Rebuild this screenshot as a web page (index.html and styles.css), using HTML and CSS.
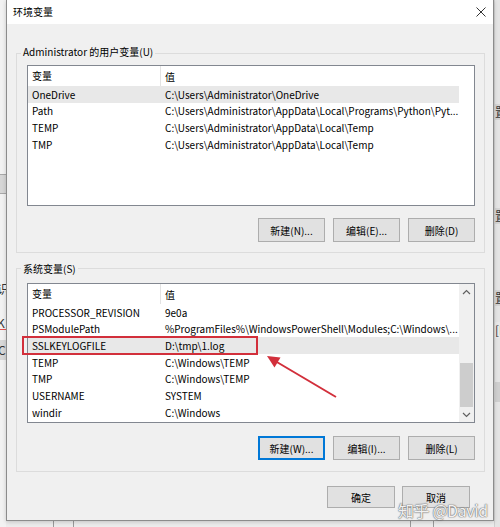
FILE: index.html
```html
<!DOCTYPE html>
<html lang="zh-CN">
<head>
<meta charset="utf-8">
<title>环境变量</title>
<link rel="stylesheet" href="styles.css">
</head>
<body>
<div class="desk">
  <div class="strip strip-l">
    <div class="sp" style="height:174px"></div>
    <div class="l-bar"></div>
    <div class="sp" style="height:88px"></div>
    <div class="l-txt">识</div>
    <div class="sp" style="height:20px"></div>
    <div class="l-txt l-k">K</div>
    <div class="sp" style="height:10px"></div>
    <div class="l-box">C</div>
  </div>
  <div class="center">
    <div class="dialog">
      <div class="titlebar">
        <span class="title">环境变量</span>
        <svg class="close" width="10" height="10" viewBox="0 0 10 10"><path d="M0.5 0.5L9.5 9.5M9.5 0.5L0.5 9.5" stroke="#333" stroke-width="1" fill="none"/></svg>
      </div>

      <div class="group">
        <div class="legend">Administrator 的用户变量(U)</div>
        <div class="list">
          <div class="lv">
            <div class="row head"><span class="c1">变量</span><span class="c2">值</span></div>
            <div class="row sel"><span class="c1">OneDrive</span><span class="c2">C:\Users\Administrator\OneDrive</span></div>
            <div class="row"><span class="c1">Path</span><span class="c2">C:\Users\Administrator\AppData\Local\Programs\Python\Pyt...</span></div>
            <div class="row"><span class="c1">TEMP</span><span class="c2">C:\Users\Administrator\AppData\Local\Temp</span></div>
            <div class="row"><span class="c1">TMP</span><span class="c2">C:\Users\Administrator\AppData\Local\Temp</span></div>
          </div>
        </div>
        <div class="btns">
          <div class="btn">新建(N)...</div>
          <div class="btn">编辑(E)...</div>
          <div class="btn">删除(D)</div>
        </div>
      </div>

      <div class="group sys">
        <div class="legend">系统变量(S)</div>
        <div class="list list-sys">
          <div class="lv">
            <div class="row head"><span class="c1">变量</span><span class="c2">值</span></div>
            <div class="row"><span class="c1">PROCESSOR_REVISION</span><span class="c2">9e0a</span></div>
            <div class="row"><span class="c1">PSModulePath</span><span class="c2">%ProgramFiles%\WindowsPowerShell\Modules;C:\Windows\...</span></div>
            <div class="row sel"><span class="c1">SSLKEYLOGFILE</span><span class="c2">D:\tmp\1.log</span></div>
            <div class="row"><span class="c1">TEMP</span><span class="c2">C:\Windows\TEMP</span></div>
            <div class="row"><span class="c1">TMP</span><span class="c2">C:\Windows\TEMP</span></div>
            <div class="row"><span class="c1">USERNAME</span><span class="c2">SYSTEM</span></div>
            <div class="row"><span class="c1">windir</span><span class="c2">C:\Windows</span></div>
          </div>
          <div class="sb">
            <div class="sb-arrow"><svg width="9" height="6" viewBox="0 0 9 6"><path d="M1 5L4.5 1.5L8 5" stroke="#606060" stroke-width="1.2" fill="none"/></svg></div>
            <div class="sb-track"><div class="sb-thumb"></div></div>
            <div class="sb-arrow"><svg width="9" height="6" viewBox="0 0 9 6"><path d="M1 1L4.5 4.5L8 1" stroke="#606060" stroke-width="1.2" fill="none"/></svg></div>
          </div>
        </div>
        <div class="btns">
          <div class="btn focus">新建(W)...</div>
          <div class="btn">编辑(I)...</div>
          <div class="btn">删除(L)</div>
        </div>
      </div>

      <div class="footer">
        <div class="btn btn-f">确定</div>
        <div class="btn btn-f">取消</div>
      </div>

      <div class="redbox"></div>
      <svg class="arrow" viewBox="7 0 486 521" width="486" height="521">
        <line x1="336" y1="397" x2="276" y2="361.5" stroke="#d22f3b" stroke-width="2"/>
        <polygon points="267,356 280.5,357.5 274.5,367.5" fill="#d22f3b"/>
      </svg>
      <div class="wm">知乎 @David</div>
    </div>
    <div class="bottom">
      <span class="vl" style="margin-left:47px"></span>
      <span class="vl" style="margin-left:19px"></span>
      <span class="vl" style="margin-left:336px"></span>
      <span class="vl" style="margin-left:22px"></span>
    </div>
  </div>
  <div class="strip strip-r">
    <div class="sp" style="height:104px"></div>
    <div class="r-band">置</div>
    <div class="sp" style="height:88px"></div>
    <div class="r-band">置</div>
    <div class="sp" style="height:66px"></div>
    <div class="r-band">置</div>
    <div class="sp" style="height:16px"></div>
    <div class="r-band r-n">[N</div>
    <div class="sp" style="height:44px"></div>
    <div class="r-bar"></div>
  </div>
</div>
</body>
</html>
```

FILE: styles.css
```css
* { box-sizing: border-box; }
html, body { margin: 0; padding: 0; }
body {
  width: 500px;
  height: 527px;
  overflow: hidden;
  background: #ececec;
  font-family: "Noto Sans CJK SC", "Noto Sans", sans-serif;
  font-size: 10px;
  color: #000;
}
.desk { display: flex; height: 527px; }
.strip { width: 6px; flex: none; display: flex; flex-direction: column; overflow: hidden; background: #f2f2f2; }
.sp { flex: none; }
.l-bar { height: 20px; background: #d6d6d6; border-top: 1px solid #a8a8a8; border-bottom: 1px solid #a8a8a8; }
.l-txt { height: 14px; line-height: 14px; font-size: 12px; margin-left: -3px; color: #333; }
.l-k { border-bottom: 1px solid #e05050; }
.l-box { height: 20px; line-height: 20px; font-size: 12px; background: #d8d8d8; margin-left: -2px; color: #333; }
.strip-r { background: #e4e4e4; border-left: 1px solid #d0d0d0; }
.r-band { height: 16px; line-height: 16px; font-size: 12px; background: #d4d4d4; color: #333; white-space: nowrap; }
.r-n { background: #e8e8e8; }
.r-bar { height: 20px; background: #cfcfcf; }

.center { width: 488px; flex: none; display: flex; flex-direction: column; }
.bottom { height: 6px; display: flex; }
.vl { width: 1px; height: 6px; background: #9a9a9a; flex: none; }

.dialog {
  width: 488px;
  height: 521px;
  flex: none;
  border: 1px solid #8c8c8c;
  border-top: 0;
  background: #f0f0f0;
  position: relative;
  display: flex;
  flex-direction: column;
  box-shadow: 0 1px 4px rgba(0,0,0,0.18);
}
.titlebar {
  height: 24px;
  flex: none;
  background: #fff;
  display: flex;
  align-items: center;
  justify-content: space-between;
  padding: 0 7px 0 6px;
}
.title { line-height: 12px; }
.close { display: block; }

.group {
  border: 1px solid #dcdcdc;
  margin: 29px 8px 0 9px;
  padding: 11px 9px 10px 10px;
  flex: none;
}
.group.sys { margin-top: 15px; padding: 14px 9px 11px 10px; }
.legend {
  display: table;
  line-height: 12px;
  margin: -19px 0 7px -6px;
  padding: 0 2px;
  background: #f0f0f0;
}
.sys .legend { margin: -20px 0 8px -6px; }

.list {
  width: 448px;
  height: 141px;
  border: 1px solid #828790;
  background: #fff;
  display: flex;
}
.list-sys { height: 140px; }
.lv { width: 431px; flex: none; }
.row { display: flex; align-items: center; height: 16.67px; white-space: nowrap; }
.row.head { height: 20px; }
.row.sel { background: #e8e8e8; }
.c1 { width: 133px; flex: none; padding-left: 4px; overflow: hidden; }
.head .c1 { border-right: 1px solid #e3e3e3; height: 20px; line-height: 20px; }
.c2 { flex: 1; min-width: 0; padding-left: 4px; overflow: hidden; }

.sb { width: 15px; flex: none; background: #f0f0f0; display: flex; flex-direction: column; }
.sb-arrow { height: 15px; flex: none; display: flex; align-items: center; justify-content: center; }
.sb-arrow svg { display: block; }
.sb-track { flex: 1; display: flex; flex-direction: column; justify-content: flex-end; padding: 0 1px; }
.sb-thumb { height: 44px; background: #cdcdcd; }

.btns { display: flex; justify-content: flex-end; gap: 8px; margin-top: 12px; padding-right: 0; }
.sys .btns { margin-top: 13px; }
.btn {
  width: 67px;
  height: 24px;
  flex: none;
  background: #e1e1e1;
  border: 1px solid #adadad;
  display: flex;
  align-items: center;
  justify-content: center;
  white-space: nowrap;
}
.btn.focus { border: 2px solid #0078d7; }
.footer { display: flex; justify-content: flex-end; gap: 7px; margin: 14px 23px 0 0; }
.btn-f { width: 68px; height: 22px; }

.redbox {
  position: absolute;
  left: 15px;
  top: 336px;
  width: 236px;
  height: 19px;
  border: 2px solid #d22f3b;
}
.arrow { position: absolute; left: 0; top: 0; pointer-events: none; }
.wm {
  position: absolute;
  left: 391px;
  top: 500px;
  font-size: 16px;
  line-height: 20px;
  letter-spacing: -0.4px;
  color: rgba(255,255,255,0.92);
  text-shadow: 0 0 1px #6e6e6e, 0 0 1px #6e6e6e, 0 0 2px rgba(0,0,0,0.3);
  white-space: nowrap;
}
```
